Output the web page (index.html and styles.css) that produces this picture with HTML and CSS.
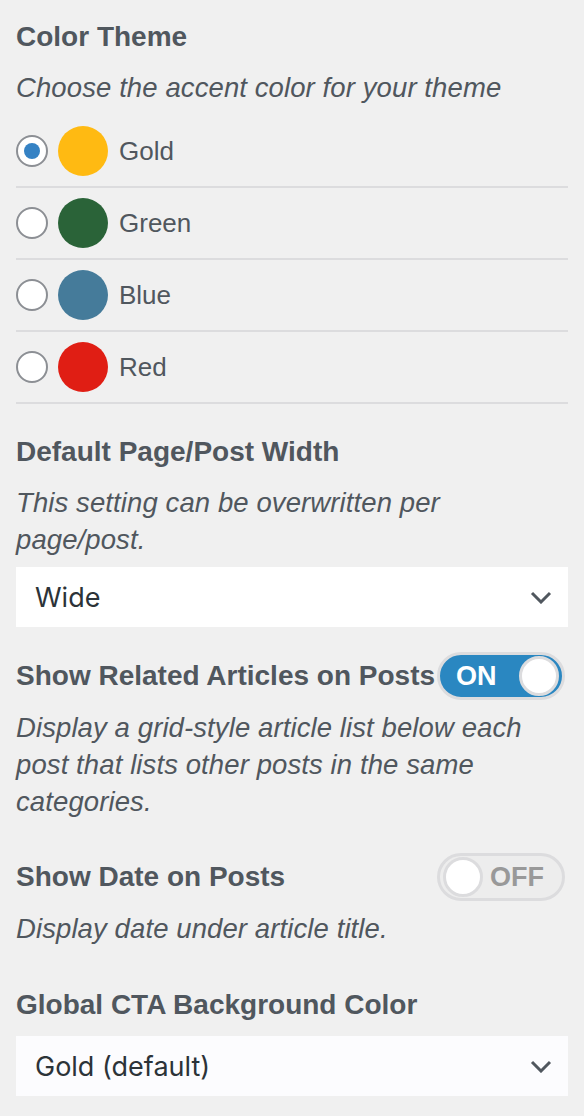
FILE: index.html
```html
<!DOCTYPE html>
<html lang="en">
<head>
    <meta charset="UTF-8">
    <meta name="viewport" content="width=device-width, initial-scale=1.0">
    <title>Theme Options</title>
    <link rel="stylesheet" href="styles.css">
</head>
<body>
    <main class="panel">
        <section class="section section-theme">
            <h2 class="section-title">Color Theme</h2>
            <p class="description">Choose the accent color for your theme</p>
            <ul class="color-list">
                <li class="color-row">
                    <span class="radio checked"></span>
                    <span class="swatch swatch-gold"></span>
                    <span class="color-label">Gold</span>
                </li>
                <li class="color-row">
                    <span class="radio"></span>
                    <span class="swatch swatch-green"></span>
                    <span class="color-label">Green</span>
                </li>
                <li class="color-row">
                    <span class="radio"></span>
                    <span class="swatch swatch-blue"></span>
                    <span class="color-label">Blue</span>
                </li>
                <li class="color-row">
                    <span class="radio"></span>
                    <span class="swatch swatch-red"></span>
                    <span class="color-label">Red</span>
                </li>
            </ul>
        </section>

        <section class="section section-width">
            <h2 class="section-title">Default Page/Post Width</h2>
            <p class="description">This setting can be overwritten per page/post.</p>
            <div class="select">
                <span>Wide</span>
                <svg class="chevron" width="22" height="13" viewBox="0 0 22 13"><path d="M2 2 L11 11 L20 2" fill="none" stroke="#50575e" stroke-width="3"/></svg>
            </div>
        </section>

        <section class="section section-related">
            <div class="toggle-row">
                <h2 class="section-title">Show Related Articles on Posts</h2>
                <span class="toggle on"><span class="toggle-text">ON</span><span class="knob"></span></span>
            </div>
            <p class="description desc-after-toggle">Display a grid-style article list below each post that lists other posts in the same categories.</p>
        </section>

        <section class="section section-date">
            <div class="toggle-row">
                <h2 class="section-title">Show Date on Posts</h2>
                <span class="toggle off"><span class="knob"></span><span class="toggle-text">OFF</span></span>
            </div>
            <p class="description desc-after-toggle">Display date under article title.</p>
        </section>

        <section class="section section-cta">
            <h2 class="section-title">Global CTA Background Color</h2>
            <div class="select select-cta">
                <span>Gold (default)</span>
                <svg class="chevron" width="22" height="13" viewBox="0 0 22 13"><path d="M2 2 L11 11 L20 2" fill="none" stroke="#50575e" stroke-width="3"/></svg>
            </div>
        </section>
    </main>
</body>
</html>
```

FILE: styles.css
```css
* {
    margin: 0;
    padding: 0;
    box-sizing: border-box;
}

body {
    font-family: "Liberation Sans", Arial, sans-serif;
    background-color: #f0f0f0;
    color: #50575e;
}

.panel {
    padding: 19px 16px 0 16px;
}

.section-title {
    font-size: 28px;
    line-height: 36px;
    font-weight: 700;
    color: #50575e;
}

.description {
    font-size: 27.5px;
    line-height: 37px;
    font-style: italic;
    letter-spacing: 0.1px;
    margin: 14px 0 10px;
}

.section-width .description {
    margin-bottom: 9px;
}

.color-list {
    list-style: none;
}

.color-row {
    display: flex;
    align-items: center;
    height: 72px;
    border-bottom: 2px solid #dcdcde;
}

.radio {
    width: 32px;
    height: 32px;
    border-radius: 50%;
    border: 2px solid #8c8f94;
    background-color: white;
    display: flex;
    align-items: center;
    justify-content: center;
}

.radio.checked::after {
    content: "";
    width: 16px;
    height: 16px;
    border-radius: 50%;
    background-color: #3582c4;
}

.swatch {
    width: 50px;
    height: 50px;
    border-radius: 50%;
    margin-left: 10px;
}

.swatch-gold { background-color: #ffba12; }
.swatch-green { background-color: #2a6338; }
.swatch-blue { background-color: #457b9a; }
.swatch-red { background-color: #e01e14; }

.color-label {
    font-size: 26px;
    margin-left: 11px;
}

.section-width {
    margin-top: 30px;
}

.select {
    display: flex;
    align-items: center;
    justify-content: space-between;
    height: 60px;
    background-color: white;
    padding: 0 16px 0 19px;
    font-family: Inter, "Liberation Sans", sans-serif;
    font-size: 27px;
    color: #2c3338;
}

.select-cta {
    background-color: #fcfcfe;
    margin-top: 13px;
}

.section-related {
    margin-top: 25px;
}

.section-date {
    margin-top: 33px;
}

.section-cta {
    margin-top: 40px;
}

.toggle-row {
    display: flex;
    align-items: center;
    justify-content: space-between;
    height: 48px;
}

.toggle {
    width: 128px;
    height: 48px;
    border-radius: 24px;
    border: 3px solid #dcdcde;
    display: flex;
    align-items: center;
    padding: 0 3px;
    margin-right: 3px;
}

.toggle.on {
    background-color: #2a87c1;
    justify-content: space-between;
    padding-left: 16px;
}

.toggle.off {
    background-color: #ededed;
}

.toggle-text {
    font-size: 27px;
    font-weight: 700;
    color: white;
}

.toggle.off .toggle-text {
    color: #999999;
    margin-left: 7px;
}

.knob {
    width: 40px;
    height: 40px;
    border-radius: 50%;
    background-color: white;
    border: 3px solid #dcdcde;
}

.desc-after-toggle {
    margin: 9px 0 0;
}
```
